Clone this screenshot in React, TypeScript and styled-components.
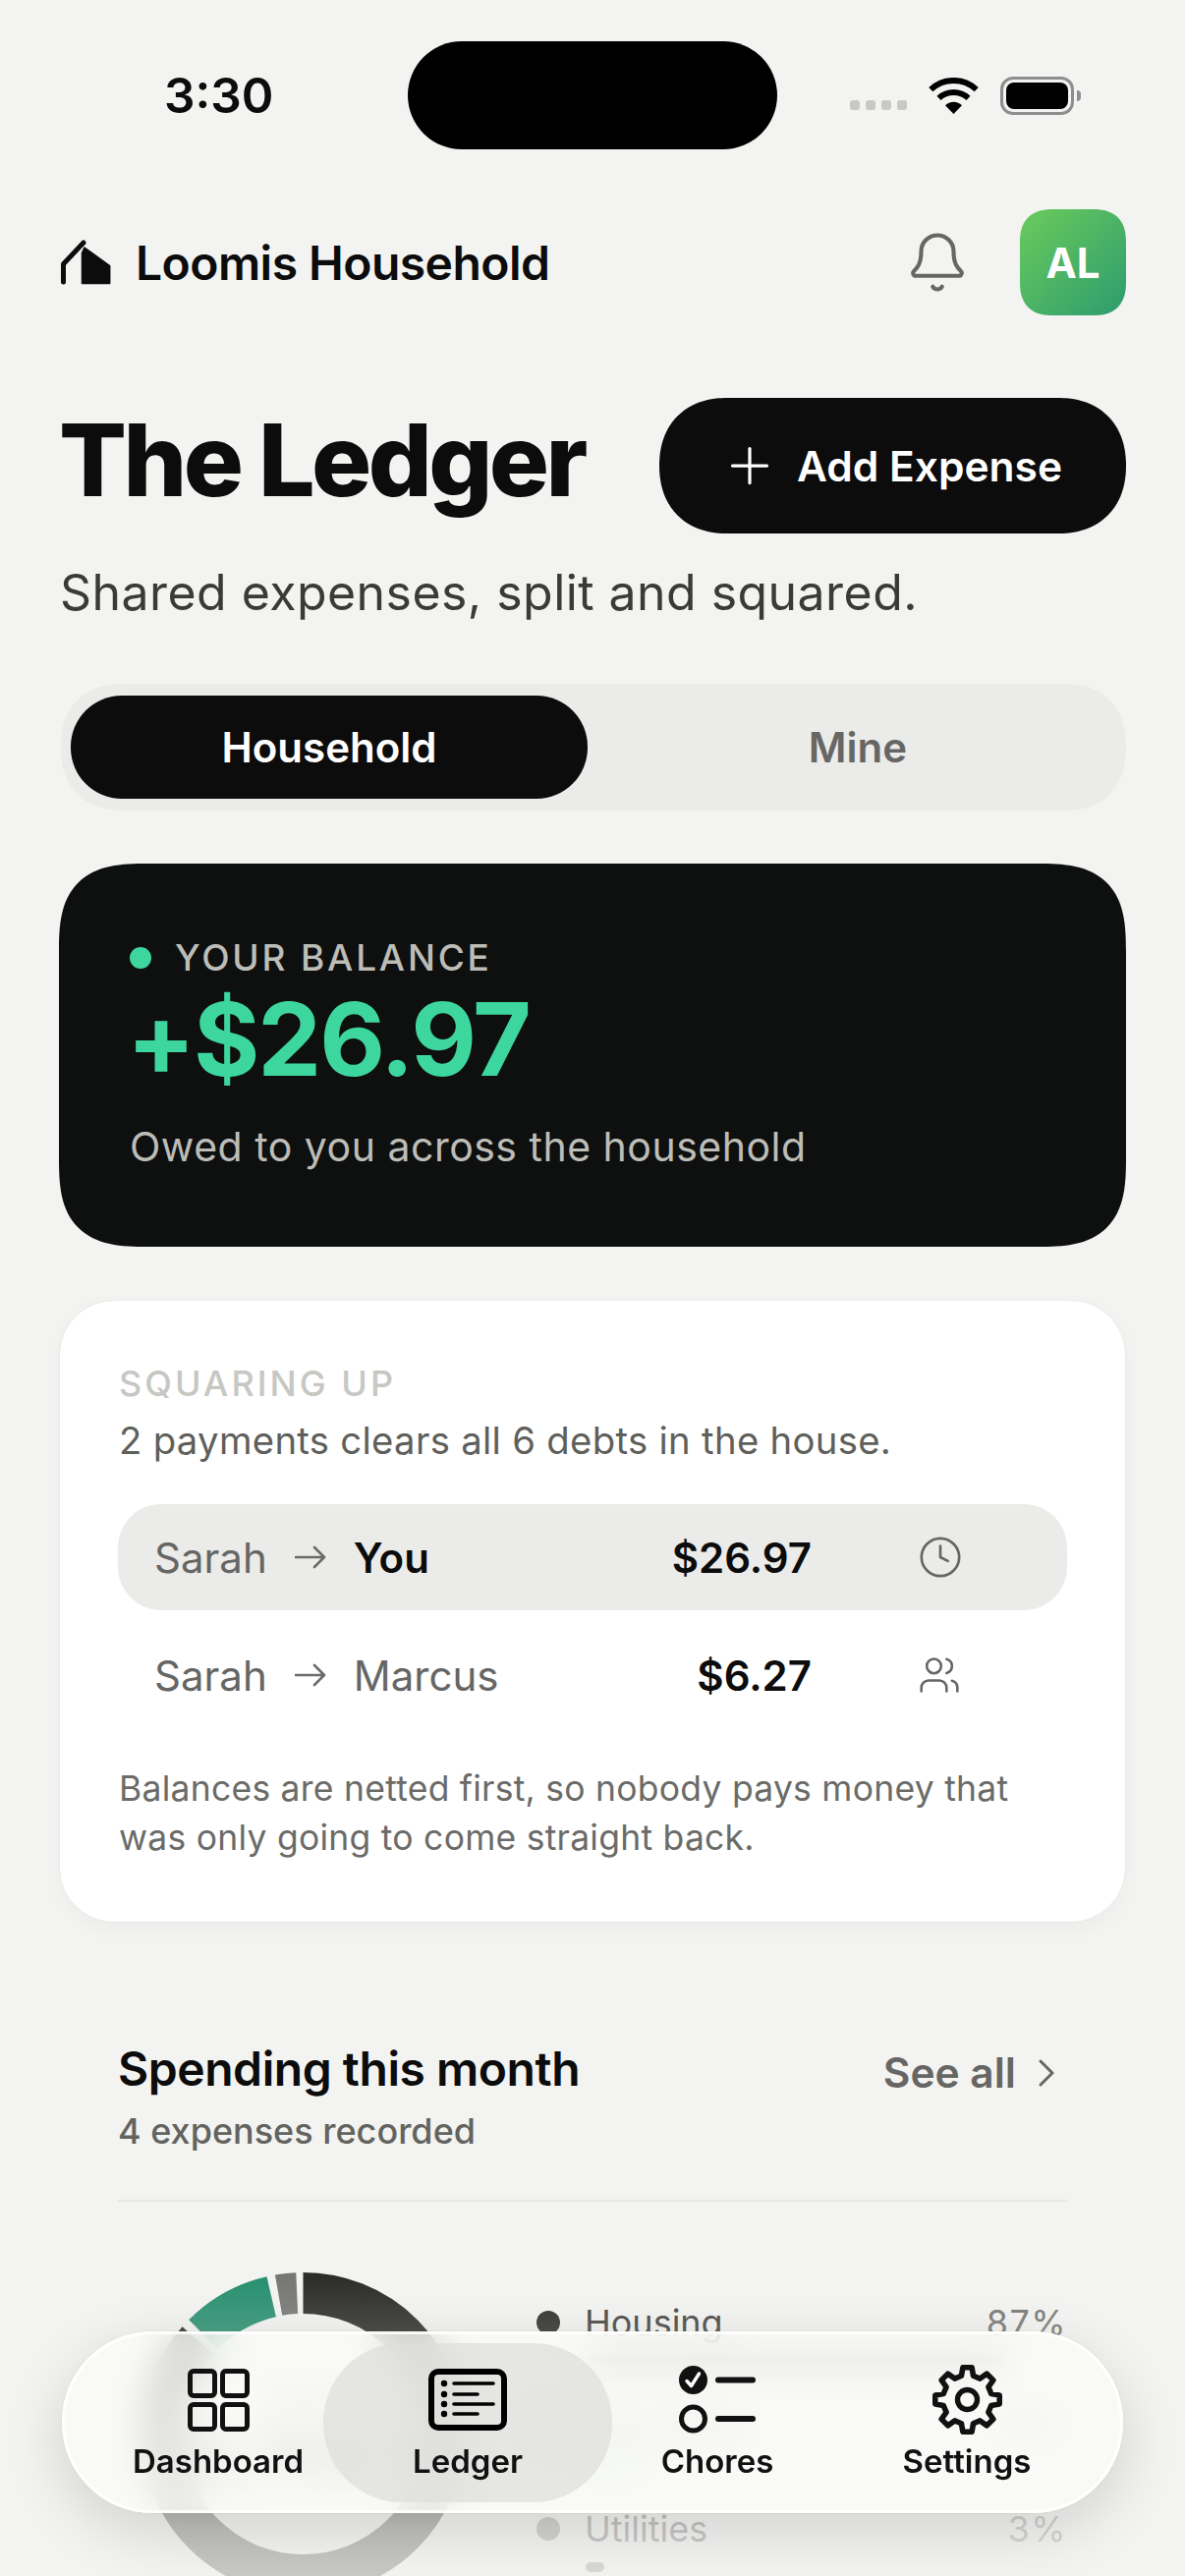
import React from 'react';
import styled, { createGlobalStyle } from 'styled-components';
import { Bell, Clock, Plus, Users } from 'lucide-react';

const GlobalStyle = createGlobalStyle`
  html, body {
    margin: 0;
    padding: 0;
    background: #f3f3f1;
  }
  * {
    box-sizing: border-box;
  }
`;

const Page = styled.div`
  position: relative;
  width: 1206px;
  height: 2622px;
  overflow: hidden;
  background: #f3f3f1;
  color: #0c0c0c;
  font-family: Inter, 'Noto Sans', sans-serif;
`;

const StatusBar = styled.div`
  display: grid;
  grid-template-columns: 248px 376px 1fr;
  align-items: center;
  padding: 42px 106px 0 167px;
`;

const Time = styled.div`
  font-size: 49.5px;
  font-weight: 600;
  line-height: 60px;
`;

const Island = styled.div`
  height: 110px;
  border-radius: 55px;
  background: #000;
`;

const StatusIcons = styled.div`
  display: flex;
  align-items: center;
  margin-left: 74px;
`;

const SignalDots = styled.div`
  display: flex;
  gap: 6px;
  margin: 19px 22px 0 0;
`;

const SignalDot = styled.span`
  width: 10px;
  height: 10px;
  border-radius: 3px;
  background: #c8c8c6;
`;

const Battery = styled.div`
  width: 75px;
  height: 39px;
  margin-left: 22px;
  padding: 3px;
  border: 3px solid #8e8e8e;
  border-radius: 13px;
`;

const BatteryFill = styled.div`
  height: 100%;
  border-radius: 8px;
  background: #000;
`;

const BatteryCap = styled.div`
  width: 4px;
  height: 11px;
  margin-left: 3px;
  border-radius: 0 4px 4px 0;
  background: #8e8e8e;
`;

const Header = styled.header`
  display: flex;
  align-items: center;
  justify-content: space-between;
  margin-top: 61px;
  padding: 0 60px 0 62px;
`;

const Brand = styled.div`
  display: flex;
  align-items: center;
  gap: 24px;
  font-size: 48px;
  font-weight: 600;
  letter-spacing: -0.55px;
`;

const HeaderActions = styled.div`
  display: flex;
  align-items: center;
  gap: 51px;
  color: #666664;
`;

const Avatar = styled.div`
  display: flex;
  align-items: center;
  justify-content: center;
  width: 108px;
  height: 108px;
  border-radius: 34px;
  corner-shape: superellipse(1.3);
  background: linear-gradient(135deg, #6bcb5b 0%, #2d9c6f 100%);
  color: #fff;
  font-size: 42px;
  font-weight: 700;
`;

const Hero = styled.div`
  display: flex;
  align-items: center;
  justify-content: space-between;
  margin-top: 84px;
  padding: 0 60px;
`;

const Title = styled.h1`
  margin: 0 0 12px;
  font-size: 102px;
  font-weight: 800;
  line-height: 124px;
  letter-spacing: -3.6px;
`;

const AddButton = styled.button`
  display: flex;
  align-items: center;
  justify-content: center;
  gap: 18px;
  width: 475px;
  height: 138px;
  padding: 0 3px 0 0;
  border: 0;
  border-radius: 69px;
  corner-shape: superellipse(1.15);
  background: #0c0c0c;
  color: #fff;
  font-family: inherit;
  font-size: 42.5px;
  font-weight: 600;
`;

const Subtitle = styled.p`
  margin: 30px 0 0;
  padding-left: 61px;
  color: #3a3a38;
  font-size: 50px;
  line-height: 60px;
  letter-spacing: 0.45px;
`;

const Segments = styled.div`
  display: grid;
  grid-template-columns: 1fr 1fr;
  gap: 12px;
  height: 129px;
  margin: 63px 60px 0 62px;
  padding: 12px 10px;
  border-radius: 64px;
  corner-shape: superellipse(1.2);
  background: #ebebe9;
`;

const Segment = styled.div<{ $active?: boolean }>`
  display: flex;
  align-items: center;
  justify-content: center;
  border-radius: 52px;
  background: ${(props) => (props.$active ? '#0c0c0c' : 'transparent')};
  color: ${(props) => (props.$active ? '#fff' : '#666664')};
  font-size: 42px;
  font-weight: 600;
`;

const BalanceCard = styled.section`
  height: 390px;
  margin: 54px 60px 0;
  padding: 68px 72px 0;
  border-radius: 90px;
  corner-shape: superellipse(1.5);
  background: #0e0f0f;
`;

const BalanceLabel = styled.div`
  display: flex;
  align-items: center;
  gap: 24px;
  color: #bdbdb8;
  font-size: 37px;
  font-weight: 500;
  line-height: 56px;
  letter-spacing: 2.8px;
`;

const GreenDot = styled.span`
  width: 22px;
  height: 22px;
  border-radius: 50%;
  background: #3dd69e;
`;

const BalanceAmount = styled.div`
  margin: -1px 0 0 -3px;
  color: #3dd69e;
  font-size: 103px;
  font-weight: 700;
  line-height: 112px;
  letter-spacing: -2px;
`;

const BalanceNote = styled.div`
  margin-top: 28px;
  color: #bdbdb8;
  font-size: 41px;
  line-height: 50px;
  letter-spacing: 0.5px;
`;

const SettleCard = styled.section`
  height: 634px;
  margin: 54px 60px 0;
  padding: 62px 60px 0;
  border: 1px solid #e9e9e7;
  border-radius: 56px;
  background: #fff;
  box-shadow: 0 6px 20px rgba(0, 0, 0, 0.03);
`;

const Eyebrow = styled.div`
  color: #c5c8c3;
  font-size: 36px;
  font-weight: 500;
  line-height: 44px;
  letter-spacing: 3px;
`;

const SettleSummary = styled.div`
  margin-top: 11px;
  color: #5f5f5c;
  font-size: 38.3px;
  line-height: 50px;
  letter-spacing: 0.3px;
`;

const Transfers = styled.div`
  margin: 40px -1px 0;
`;

const Transfer = styled.div<{ $highlighted?: boolean }>`
  display: grid;
  grid-template-columns: 1fr auto 46px;
  align-items: center;
  column-gap: 108px;
  height: 108px;
  margin-bottom: 12px;
  padding: 0 106px 0 37px;
  border-radius: 44px;
  background: ${(props) => (props.$highlighted ? '#ebebe9' : 'transparent')};
  color: #666664;
`;

const Parties = styled.div`
  display: flex;
  align-items: center;
  gap: 28px;
  font-size: 42px;
`;

const Recipient = styled.span<{ $you?: boolean }>`
  color: ${(props) => (props.$you ? '#0c0c0c' : '#666664')};
  font-weight: ${(props) => (props.$you ? 600 : 400)};
`;

const Amount = styled.div`
  color: #0c0c0c;
  font-size: 42px;
  font-weight: 600;
`;

const SettleNote = styled.p`
  margin: 37px 0 0;
  color: #6b6b68;
  font-size: 35.5px;
  line-height: 50px;
  letter-spacing: 0.25px;
`;

const Spending = styled.section`
  margin: 118px 120px 0 120px;
`;

const SpendingHead = styled.div`
  display: flex;
  align-items: flex-start;
  justify-content: space-between;
  padding-bottom: 46px;
  border-bottom: 2px solid #e6e6e4;
`;

const SpendingTitle = styled.h2`
  margin: 0;
  font-size: 48px;
  font-weight: 600;
  line-height: 62px;
  letter-spacing: -0.45px;
`;

const SpendingCount = styled.div`
  margin-top: 8px;
  color: #636360;
  font-size: 36px;
  font-weight: 500;
  line-height: 48px;
`;

const SeeAll = styled.div`
  display: flex;
  align-items: center;
  gap: 22px;
  margin: 7px 12px 0 0;
  color: #666664;
  font-size: 42.5px;
  font-weight: 600;
  line-height: 56px;
`;

const Breakdown = styled.div`
  display: flex;
  gap: 73px;
  margin-top: 72px;
  padding-left: 24px;
`;

const Donut = styled.div`
  position: relative;
  flex: none;
  width: 329px;
  height: 329px;
`;

const DonutCentre = styled.div`
  position: absolute;
  inset: 0;
  display: flex;
  flex-direction: column;
  align-items: center;
  justify-content: center;
  color: #777;
  font-size: 36px;
`;

const DonutTotal = styled.div`
  color: #0c0c0c;
  font-size: 62px;
  font-weight: 700;
`;

const Legend = styled.div`
  flex: 1;
  display: flex;
  flex-direction: column;
  gap: 37px;
  margin-top: 27px;
`;

const LegendHead = styled.div`
  display: flex;
  align-items: center;
  height: 48px;
  font-size: 36px;
`;

const LegendDot = styled.span<{ $color: string }>`
  width: 24px;
  height: 24px;
  margin-right: 25px;
  border-radius: 50%;
  background: ${(props) => props.$color};
`;

const LegendName = styled.span`
  flex: 1;
  color: #3a3a38;
`;

const LegendShare = styled.span`
  color: #6f6f6c;
  letter-spacing: 1.4px;
`;

const LegendBar = styled.div<{ $color: string }>`
  height: 10px;
  margin: 10px 0 0 50px;
  border-radius: 5px;
  background: ${(props) => props.$color};
`;

const BottomFade = styled.div`
  position: absolute;
  left: 0;
  right: 0;
  bottom: 0;
  height: 322px;
  background: linear-gradient(
    180deg,
    rgba(243, 243, 241, 0) 0%,
    rgba(243, 243, 241, 0.75) 84%,
    rgba(243, 243, 241, 0.8) 100%
  );
`;

const TabBar = styled.nav`
  position: absolute;
  left: 63px;
  right: 63px;
  bottom: 64px;
  isolation: isolate;
  display: grid;
  grid-template-columns: repeat(4, 1fr);
  height: 185px;
  padding: 0 32px;
  border-radius: 92px;
  background: rgba(251, 251, 249, 0.76);
  backdrop-filter: blur(18px);
  box-shadow: 0 18px 60px rgba(0, 0, 0, 0.14), 0 0 0 1px rgba(0, 0, 0, 0.03),
    inset 0 0 0 3px rgba(255, 255, 255, 0.85);
`;

const Tab = styled.div<{ $active?: boolean }>`
  position: relative;
  display: flex;
  flex-direction: column;
  align-items: center;
  justify-content: center;
  gap: 6px;
  color: #111;
  font-size: 33px;
  font-weight: 600;
  line-height: 40px;

  &::before {
    content: '';
    display: ${(props) => (props.$active ? 'block' : 'none')};
    position: absolute;
    z-index: -1;
    inset: 12px -20px 11px;
    border-radius: 80px;
    background: rgba(222, 222, 219, 0.72);
  }
`;

const TabIcon = styled.div`
  display: flex;
  align-items: center;
  justify-content: center;
  height: 73px;
`;

const HouseMark = () => (
  <svg width="52" height="46" viewBox="0 0 52 46">
    <path d="M2.5 43V24.7L23 3" fill="none" stroke="#0c0c0c" strokeWidth="5" strokeLinecap="round" strokeLinejoin="round" />
    <path d="M21.5 43.5V13.5L24 8L49.7 26.7V44.5H21.5Z" fill="#0c0c0c" stroke="#0c0c0c" strokeWidth="1.5" strokeLinejoin="round" />
  </svg>
);

const WifiGlyph = () => (
  <svg width="51" height="37" viewBox="0 0 51 37">
    <path d="M2.3 12.1A34 34 0 0 1 48.7 12.1" fill="none" stroke="#000" strokeWidth="6" />
    <path d="M10.5 20.9A22 22 0 0 1 40.5 20.9" fill="none" stroke="#000" strokeWidth="6" />
    <path d="M25.5 37L17 28.2A12 12 0 0 1 34 28.2Z" fill="#000" />
  </svg>
);

const ArrowGlyph = () => (
  <svg width="32" height="24" viewBox="0 0 32 24">
    <path d="M1 12H30M20 2L30 12L20 22" fill="none" stroke="#6b6b68" strokeWidth="2.6" strokeLinecap="round" strokeLinejoin="round" />
  </svg>
);

const ChevronGlyph = () => (
  <svg width="18" height="28" viewBox="0 0 18 28">
    <path d="M3 2L15 14L3 26" fill="none" stroke="#666664" strokeWidth="3" strokeLinecap="round" strokeLinejoin="round" />
  </svg>
);

const GridGlyph = () => (
  <svg width="63" height="64" viewBox="0 0 63 64" fill="none" stroke="#111" strokeWidth="5">
    <rect x="2.5" y="2.5" width="25" height="25" rx="3.5" />
    <rect x="35.5" y="2.5" width="25" height="25" rx="3.5" />
    <rect x="2.5" y="36.5" width="25" height="25" rx="3.5" />
    <rect x="35.5" y="36.5" width="25" height="25" rx="3.5" />
  </svg>
);

const LedgerGlyph = () => (
  <svg width="80" height="63" viewBox="0 0 80 63" fill="none" stroke="#000">
    <rect x="3" y="3" width="74" height="57" rx="7" strokeWidth="6" />
    {[15, 26, 36, 46].map((y, i) => (
      <React.Fragment key={y}>
        <circle cx="16" cy={y} r="3.2" fill="#000" stroke="none" />
        <path d={`M26 ${y}H${i % 2 ? 50 : 66}`} strokeWidth="3.6" strokeLinecap="round" />
      </React.Fragment>
    ))}
  </svg>
);

const ChoresGlyph = () => (
  <svg width="78" height="69" viewBox="0 0 78 69" fill="none">
    <circle cx="14.5" cy="14.5" r="14.5" fill="#111" />
    <path d="M8 15.5L12.5 20.5L20.5 8" stroke="#fff" strokeWidth="3.4" strokeLinecap="round" strokeLinejoin="round" />
    <circle cx="14.5" cy="54" r="12" stroke="#111" strokeWidth="5" />
    <path d="M40 14.5H75M40 54H75" stroke="#111" strokeWidth="6" strokeLinecap="round" />
  </svg>
);

// eight teeth, pointing straight up at the first one
const gearPath = (() => {
  const c = 36.5;
  const point = (deg: number, r: number) => {
    const a = (deg * Math.PI) / 180;
    return `${(c + r * Math.cos(a)).toFixed(2)} ${(c + r * Math.sin(a)).toFixed(2)}`;
  };
  const parts: string[] = [];
  for (let i = 0; i < 8; i++) {
    const a = -90 + i * 45;
    parts.push(point(a - 14, 25), point(a - 8, 33), point(a + 8, 33), point(a + 14, 25));
  }
  return `M${parts.join('L')}Z`;
})();

const GearGlyph = () => (
  <svg width="73" height="73" viewBox="0 0 73 73" fill="none" stroke="#111">
    <path d={gearPath} strokeWidth="5.6" strokeLinejoin="round" />
    <circle cx="36.5" cy="36.5" r="10" strokeWidth="5.4" />
  </svg>
);

const segments = [
  { color: '#222220', from: 0, to: 311.5 },
  { color: '#1d8a68', from: 315, to: 347 },
  { color: '#6f716e', from: 350, to: 357.5 },
];

const categories = [
  { name: 'Housing', share: 87, color: '#222220', bar: '#222220' },
  { name: 'Groceries', share: 10, color: '#1d8a68', bar: '#3dd69e' },
  { name: 'Utilities', share: 3, color: '#6f716e', bar: '#6f716e' },
];

const tabs = [
  { label: 'Dashboard', icon: <GridGlyph /> },
  { label: 'Ledger', icon: <LedgerGlyph />, active: true },
  { label: 'Chores', icon: <ChoresGlyph /> },
  { label: 'Settings', icon: <GearGlyph /> },
];

const DonutChart = () => {
  const r = 143.5;
  const circumference = 2 * Math.PI * r;
  return (
    <svg width="329" height="329" viewBox="0 0 329 329">
      {segments.map((s) => (
        <circle
          key={s.color}
          cx="164.5"
          cy="164.5"
          r={r}
          fill="none"
          stroke={s.color}
          strokeWidth="42"
          strokeDasharray={`${((s.to - s.from) / 360) * circumference} ${circumference}`}
          transform={`rotate(${s.from - 90} 164.5 164.5)`}
        />
      ))}
    </svg>
  );
};

export default function App() {
  return (
    <Page>
      <GlobalStyle />
      <StatusBar>
        <Time>3:30</Time>
        <Island />
        <StatusIcons>
          <SignalDots>
            <SignalDot />
            <SignalDot />
            <SignalDot />
            <SignalDot />
          </SignalDots>
          <WifiGlyph />
          <Battery>
            <BatteryFill />
          </Battery>
          <BatteryCap />
        </StatusIcons>
      </StatusBar>

      <Header>
        <Brand>
          <HouseMark />
          Loomis Household
        </Brand>
        <HeaderActions>
          <Bell size={66} strokeWidth={1.5} />
          <Avatar>AL</Avatar>
        </HeaderActions>
      </Header>

      <Hero>
        <Title>The Ledger</Title>
        <AddButton>
          <Plus size={60} strokeWidth={1.3} />
          Add Expense
        </AddButton>
      </Hero>
      <Subtitle>Shared expenses, split and squared.</Subtitle>

      <Segments>
        <Segment $active>Household</Segment>
        <Segment>Mine</Segment>
      </Segments>

      <BalanceCard>
        <BalanceLabel>
          <GreenDot />
          YOUR BALANCE
        </BalanceLabel>
        <BalanceAmount>+$26.97</BalanceAmount>
        <BalanceNote>Owed to you across the household</BalanceNote>
      </BalanceCard>

      <SettleCard>
        <Eyebrow>SQUARING UP</Eyebrow>
        <SettleSummary>2 payments clears all 6 debts in the house.</SettleSummary>
        <Transfers>
          <Transfer $highlighted>
            <Parties>
              Sarah
              <ArrowGlyph />
              <Recipient $you>You</Recipient>
            </Parties>
            <Amount>$26.97</Amount>
            <Clock size={46} strokeWidth={1.4} />
          </Transfer>
          <Transfer>
            <Parties>
              Sarah
              <ArrowGlyph />
              <Recipient>Marcus</Recipient>
            </Parties>
            <Amount>$6.27</Amount>
            <Users size={44} strokeWidth={1.4} />
          </Transfer>
        </Transfers>
        <SettleNote>
          Balances are netted first, so nobody pays money that
          <br />
          was only going to come straight back.
        </SettleNote>
      </SettleCard>

      <Spending>
        <SpendingHead>
          <div>
            <SpendingTitle>Spending this month</SpendingTitle>
            <SpendingCount>4 expenses recorded</SpendingCount>
          </div>
          <SeeAll>
            See all
            <ChevronGlyph />
          </SeeAll>
        </SpendingHead>
        <Breakdown>
          <Donut>
            <DonutChart />
            <DonutCentre>
              Total
              <DonutTotal>$2,754.12</DonutTotal>
            </DonutCentre>
          </Donut>
          <Legend>
            {categories.map((c) => (
              <div key={c.name}>
                <LegendHead>
                  <LegendDot $color={c.color} />
                  <LegendName>{c.name}</LegendName>
                  <LegendShare>{c.share}%</LegendShare>
                </LegendHead>
                <LegendBar $color={c.bar} style={{ width: `${c.share * 4.85 + 4}px` }} />
              </div>
            ))}
          </Legend>
        </Breakdown>
      </Spending>

      <BottomFade />

      <TabBar>
        {tabs.map((t) => (
          <Tab key={t.label} $active={t.active}>
            <TabIcon>{t.icon}</TabIcon>
            {t.label}
          </Tab>
        ))}
      </TabBar>
    </Page>
  );
}
